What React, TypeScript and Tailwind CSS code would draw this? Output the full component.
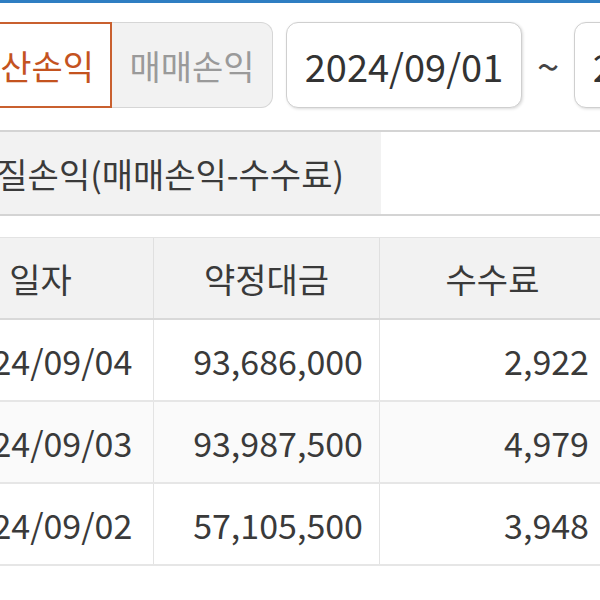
import React from 'react'

const rows = [
  { date: '2024/09/04', amount: '93,686,000', fee: '2,922' },
  { date: '2024/09/03', amount: '93,987,500', fee: '4,979' },
  { date: '2024/09/02', amount: '57,105,500', fee: '3,948' },
]

export default function App() {
  return (
    <div
      className="w-[600px] h-[600px] overflow-hidden bg-white text-[#3a3a3a]"
      style={{ fontFamily: '"Noto Sans CJK KR", "Noto Sans", sans-serif' }}
    >
      {/* top accent */}
      <div className="h-[3px] bg-[#2f7ec2]" />

      <div className="-ml-[72px] w-[900px]">
        {/* tabs + period */}
        <div className="flex items-center pl-[23px] pt-[19px]">
          <div className="flex h-[86px] shrink-0">
            <div className="w-[161px] flex items-center justify-center border-2 border-[#c9602f] bg-white text-[#c4531f] text-[34px]">
              정산손익
            </div>
            <div className="w-[161px] flex items-center justify-center border border-l-0 border-[#d6d6d6] rounded-r-[12px] bg-[#f2f2f2] text-[#9a9a9a] text-[34px]">
              매매손익
            </div>
          </div>
          <div className="shrink-0 ml-[13px] w-[236px] h-[86px] flex items-center justify-center border border-[#cfcfcf] rounded-[12px] bg-white shadow-[1px_1px_3px_rgba(0,0,0,0.15)] text-[38px] text-[#333]">
            2024/09/01
          </div>
          <div className="shrink-0 w-[52px] text-center text-[40px] leading-none text-[#444]">~</div>
          <div className="shrink-0 w-[236px] h-[86px] flex items-center justify-center border border-[#cfcfcf] rounded-[12px] bg-white shadow-[1px_1px_3px_rgba(0,0,0,0.15)] text-[38px] text-[#333]">
            2024/09/04
          </div>
        </div>

        {/* summary row */}
        <div className="mt-[22px] flex h-[86px] border-y-2 border-[#d4d4d4]">
          <div className="w-[453px] flex items-center justify-center bg-[#f2f2f2] text-[34px] text-[#3a3a3a]">
            실질손익(매매손익-수수료)
          </div>
          <div className="flex-1 bg-white" />
        </div>

        {/* table */}
        <div className="mt-[21px] border-t border-[#e3e3e3]">
          <div className="grid grid-cols-[226px_226px_226px] h-[82px] bg-[#f2f2f2] border-b-2 border-[#d9d9d9] text-[34px] text-[#3a3a3a]">
            <div className="flex items-center justify-center border-r border-[#e0e0e0]">일자</div>
            <div className="flex items-center justify-center border-r border-[#e0e0e0]">약정대금</div>
            <div className="flex items-center justify-center border-r border-[#e0e0e0]">수수료</div>
          </div>
          {rows.map((r, i) => (
            <div
              key={r.date}
              className={
                'grid grid-cols-[226px_226px_226px] h-[82px] border-b-2 border-[#e6e6e6] text-[34px] text-[#3a3a3a] ' +
                (i === 1 ? 'bg-[#fafafa]' : 'bg-white')
              }
            >
              <div className="flex items-center justify-center pl-[6px] border-r border-[#e3e3e3]">{r.date}</div>
              <div className="flex items-center justify-end pr-[16px] border-r border-[#e3e3e3]">{r.amount}</div>
              <div className="flex items-center justify-end pr-[16px] border-r border-[#e3e3e3]">{r.fee}</div>
            </div>
          ))}
        </div>
      </div>
    </div>
  )
}
